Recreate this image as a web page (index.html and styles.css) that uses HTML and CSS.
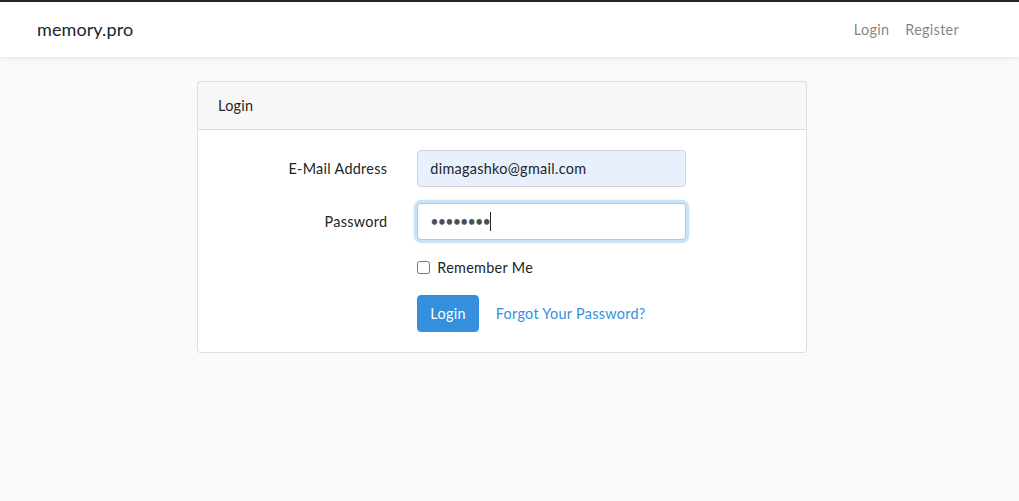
FILE: index.html
```html
<!DOCTYPE html>
<html lang="en">
<head>
<meta charset="utf-8">
<title>memory.pro</title>
<link rel="stylesheet" href="styles.css">
</head>
<body>
<div class="app">
  <nav class="navbar">
    <div class="container nav-inner">
      <a class="brand" href="#">memory.pro</a>
      <ul class="nav-links">
        <li><a class="nav-link" href="#">Login</a></li>
        <li><a class="nav-link" href="#">Register</a></li>
      </ul>
    </div>
  </nav>
  <main class="main">
    <div class="container">
      <div class="col-center">
        <div class="card">
          <div class="card-header">Login</div>
          <div class="card-body">
            <form class="form">
              <div class="form-row">
                <label class="col-label" for="email">E-Mail Address</label>
                <div class="col-field">
                  <input id="email" type="email" class="form-control autofilled" value="dimagashko@gmail.com">
                </div>
              </div>
              <div class="form-row">
                <label class="col-label" for="password">Password</label>
                <div class="col-field">
                  <div class="input-wrap">
                    <input id="password" type="password" class="form-control focused pw" value="12345678">
                    <span class="caret"></span>
                  </div>
                </div>
              </div>
              <div class="form-row">
                <div class="col-label"></div>
                <div class="col-field">
                  <div class="form-check">
                    <input class="check" type="checkbox" id="remember">
                    <label class="check-label" for="remember">Remember Me</label>
                  </div>
                </div>
              </div>
              <div class="form-row last">
                <div class="col-label"></div>
                <div class="col-field actions">
                  <button type="button" class="btn">Login</button>
                  <a class="btn-link" href="#">Forgot Your Password?</a>
                </div>
              </div>
            </form>
          </div>
        </div>
      </div>
    </div>
  </main>
</div>
</body>
</html>
```
FILE: styles.css
```css
* { box-sizing: border-box; }
html, body { margin: 0; padding: 0; }
body {
  font-family: "Lato", "Noto Sans", sans-serif;
  font-size: 14.4px;
  line-height: 1.6;
  letter-spacing: 0.3px;
  color: #212529;
  background: #f8fafc;
  border-top: 2px solid #232323;
  padding-right: 15px;
  min-height: 501px;
}
a { text-decoration: none; }
.container {
  width: 960px;
  margin: 0 auto;
  padding: 0 15px;
}
.navbar {
  background: #fff;
  box-shadow: 0 2px 4px rgba(0,0,0,0.075);
  padding: 8px 0;
  margin-right: -15px;
  padding-right: 15px;
}
.nav-inner {
  display: flex;
  align-items: center;
  justify-content: space-between;
}
.brand {
  font-size: 18px;
  line-height: 28.8px;
  padding: 5.3px 0;
  color: #212529;
  letter-spacing: 0.1px;
}
.nav-links {
  list-style: none;
  margin: 0;
  padding: 0;
  display: flex;
}
.nav-link {
  display: block;
  padding: 8px 8px;
  color: rgba(0,0,0,0.5);
}
.main { padding: 24px 0; }
.col-center {
  width: 610px;
  margin: 0 auto;
}
.card {
  background: #fff;
  border: 1px solid rgba(0,0,0,0.125);
  border-radius: 4px;
}
.card-header {
  padding: 12px 20px;
  background: rgba(0,0,0,0.03);
  border-bottom: 1px solid rgba(0,0,0,0.125);
}
.card-body { padding: 20px; }
.form-row {
  display: flex;
  margin: 0 -15px 16px;
}
.form-row.last { margin-bottom: 0; }
.col-label {
  width: 33.3333%;
  padding: 7px 15px;
  text-align: right;
}
.col-field {
  width: 50%;
  padding: 0 15px;
}
.form-control {
  display: block;
  width: 100%;
  height: 37px;
  padding: 6px 12px;
  font: inherit;
  letter-spacing: 0.3px;
  color: #495057;
  background: #fff;
  border: 1px solid #ced4da;
  border-radius: 4px;
  outline: none;
}
.form-control.autofilled { background: #e8f0fe; color: #212529; }
.form-control.focused {
  border-color: #a1cbef;
  box-shadow: 0 0 0 3.2px rgba(52,144,220,0.25);
}
.form-control.pw { letter-spacing: -0.9px; }
.input-wrap { position: relative; }
.caret {
  position: absolute;
  left: 73px;
  top: 9px;
  width: 1px;
  height: 19px;
  background: #212529;
}
.form-check {
  display: flex;
  align-items: center;
  gap: 7px;
  height: 22px;
}
.check { margin: 0; width: 13px; height: 13px; }
.check-label { line-height: 22px; }
.actions {
  display: flex;
  align-items: center;
  gap: 5px;
}
.btn {
  font: inherit;
  letter-spacing: 0.3px;
  color: #fff;
  background: #3490dc;
  border: 1px solid #3490dc;
  border-radius: 4px;
  padding: 6px 12px;
  line-height: 23px;
}
.btn-link {
  color: #3490dc;
  padding: 6px 12px;
}
```
